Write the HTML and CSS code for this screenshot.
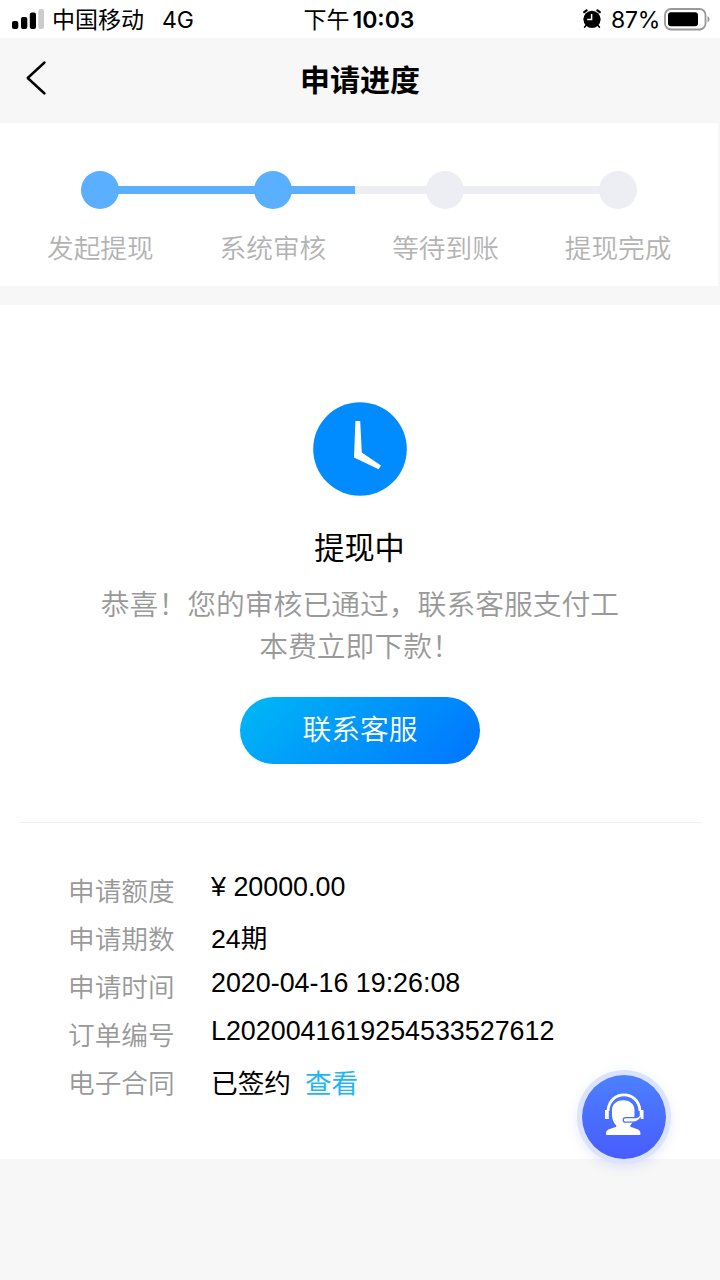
FILE: index.html
```html
<!DOCTYPE html>
<html lang="zh-CN">
<head>
<meta charset="UTF-8">
<title>申请进度</title>
<link rel="stylesheet" href="styles.css">
</head>
<body>
<div class="status">
  <div class="status-side">
    <svg class="signal" width="33" height="22" viewBox="0 0 33 22">
      <rect x="0" y="13" width="6.3" height="8" rx="2"/>
      <rect x="9" y="9" width="6.3" height="12" rx="2"/>
      <rect x="17.8" y="4.5" width="6.2" height="16.5" rx="2"/>
      <rect x="26.3" y="1" width="5.7" height="20" rx="2" fill="#ccc"/>
    </svg>
    <span class="carrier">中国移动</span>
    <span class="network">4G</span>
  </div>
  <div class="clock"><span>下午</span><b>10:03</b></div>
  <div class="status-side status-right">
    <svg class="alarm" width="20" height="20" viewBox="0 0 20 20">
      <circle cx="10" cy="10.3" r="8.6"/>
      <path d="M2.2 3.2 4.6 1.4M17.8 3.2 15.4 1.4" stroke="#000" stroke-width="2.2" stroke-linecap="round"/>
      <path d="M4 16.5 2.7 18M16 16.5 17.3 18" stroke="#000" stroke-width="1.8" stroke-linecap="round"/>
      <path d="M9.600 5V10.600H5.200" fill="none" stroke="#fff" stroke-width="1.5"/>
    </svg>
    <span class="percent">87%</span>
    <svg class="battery" width="46" height="23" viewBox="0 0 46 23">
      <rect x="1" y="1" width="40.5" height="20.5" rx="6" fill="#fff" stroke="#999" stroke-width="1.8"/>
      <rect x="4" y="4.3" width="30" height="14" rx="3"/>
      <path d="M43.5 8q2 .7 2 3.3t-2 3.3z" fill="#999"/>
    </svg>
  </div>
</div>
<header class="nav">
  <svg class="back" width="22" height="36" viewBox="0 0 22 36">
    <path d="M19.5 2.5 2.7 18 19.5 33.5" fill="none" stroke="#000" stroke-width="2.4" stroke-linecap="round" stroke-linejoin="round"/>
  </svg>
  <h1>申请进度</h1>
</header>
<section class="steps">
  <div class="step done"><i class="dot"></i><span>发起提现</span></div>
  <div class="step current"><i class="dot"></i><span>系统审核</span></div>
  <div class="step"><i class="dot"></i><span>等待到账</span></div>
  <div class="step"><i class="dot"></i><span>提现完成</span></div>
</section>
<main class="panel">
  <section class="result">
    <svg class="result-icon" width="94" height="94" viewBox="0 0 94 94">
      <circle cx="47" cy="47" r="46.8" fill="#008cff"/>
      <path d="M42.4 19h4.8l1.6 31.5L68 63.500 65.600 67.300 41 55.400z" fill="#fff"/>
    </svg>
    <h2>提现中</h2>
    <p>恭喜！您的审核已通过，联系客服支付工本费立即下款！</p>
    <a class="contact">联系客服</a>
  </section>
  <dl class="details">
    <dt>申请额度</dt><dd class="latin">¥ 20000.00</dd>
    <dt>申请期数</dt><dd>24期</dd>
    <dt>申请时间</dt><dd class="latin">2020-04-16 19:26:08</dd>
    <dt>订单编号</dt><dd class="latin">L2020041619254533527612</dd>
    <dt>电子合同</dt><dd>已签约<a class="view">查看</a></dd>
  </dl>
</main>
<a class="service">
  <svg width="40" height="44" viewBox="0 0 40 44">
    <path d="M4 19C5-2.500 35-2.500 36 19" fill="none" stroke="#fff" stroke-width="2.8"/>
    <path d="M1 18h3.800v9H1zM35.700 18h3.800v9h-3.800z" fill="#fff"/>
    <path d="M8 18C8 5 30.500 5 30.500 18V22c0 6-2.200 9-4.500 12 2 3 10.500 1.500 10.500 7.500 0 1-.5 1.500-1.500 1.500H3.500C2.500 43 2 42.500 2 41.500 2 35.500 11 37 12.500 34 10 31 8 28 8 22z" fill="#fff"/>
    <path d="M35.500 23.500Q34 26 30 25.600H21.500a2.300 2.300 0 0 0 0 4.600H29Q34.500 29.800 36.800 25.500" fill="#fff" stroke="#4b6dff" stroke-width="1.2"/>
  </svg>
</a>
</body>
</html>
```
FILE: styles.css
```css
* { box-sizing: border-box; }
body {
  margin: 0;
  width: 720px;
  height: 1280px;
  overflow: hidden;
  background: #f7f7f7;
  color: #000;
  font-family: "Liberation Sans", "Noto Sans CJK SC", sans-serif;
}
h1, h2, p, dl, dd { margin: 0; }
svg { display: block; flex: none; }
.status {
  display: grid;
  grid-template-columns: 1fr auto 1fr;
  height: 38px;
  padding: 0 10px 0 12px;
  background: #fff;
  font: 23px/40px Inter, "Noto Sans CJK SC", sans-serif;
}
.status-side { display: flex; align-items: center; height: 38px; white-space: nowrap; }
.status-side span { padding-top: 2px; }
.carrier { margin-left: 7px; }
.network { margin-left: 18px; }
.clock { margin-left: -4px; }
.clock b { font-weight: 600; margin-left: 3px; }
.percent { margin: 0 4px 0 9px; letter-spacing: -.3px; }
.status-right { justify-content: flex-end; }
.nav {
  display: grid;
  grid-template-columns: 60px 1fr 60px;
  align-items: center;
  height: 85px;
  padding: 0 0 5px;
}
.back { margin-left: 25px; }
h1 { padding-top: 5px; text-align: center; font-size: 30px; line-height: 40px; font-weight: 700; }
.steps {
  display: flex;
  width: 718px;
  height: 163px;
  padding: 48px 0 0 14px;
  background: #fff;
}
.step {
  flex: none;
  display: flex;
  flex-direction: column;
  align-items: center;
  width: 172.6px;
  color: #b3b3b3;
  font-size: 26.67px;
  font-weight: 350;
  line-height: 38px;
  background: linear-gradient(#edeef4, #edeef4) 0 15px / 100% 8px no-repeat;
}
.step:first-child { background-size: 87px 8px; background-position: 86px 15px; }
.step:last-child { background-size: 50% 8px; }
.step.done { background-image: linear-gradient(#5ab0ff, #5ab0ff); }
.step.current { background-image: linear-gradient(90deg, #5ab0ff 97.5%, #edeef4 97.5%); }
.dot { width: 38px; height: 38px; border-radius: 50%; background: #edeef4; }
.done .dot, .current .dot { background: #5ab0ff; }
.step span { margin-top: 21px; }
.panel { height: 854px; margin-top: 19px; background: #fff; }
.result {
  display: flex;
  flex-direction: column;
  align-items: center;
  height: 518px;
  margin: 0 18px 0 20px;
  padding: 97px 0 0;
  border-bottom: 1px solid #f0f0f0;
}
.result-icon { margin-left: -2px; }
h2 { margin: 32px 0 0 -3px; font-size: 30.2px; font-weight: 400; line-height: 42px; }
p {
  width: 520px;
  margin: 14px 0 0 -2px;
  text-align: center;
  color: #999;
  font-size: 28.8px;
  font-weight: 350;
  line-height: 42px;
}
.contact {
  width: 240px;
  height: 67px;
  margin: 29px 0 0 -2px;
  border-radius: 34px;
  background: linear-gradient(135deg, #00b8f5, #0074ff);
  color: #fff;
  font-size: 28.8px;
  font-weight: 350;
  line-height: 67px;
  text-align: center;
}
.details {
  display: grid;
  grid-template-columns: 143px 1fr;
  grid-auto-rows: 48px;
  padding: 45px 0 0 68px;
  font-size: 26.67px;
  line-height: 48px;
}
dt { color: #999; font-weight: 350; }
dd { margin-top: -1px; }
dd:last-child { margin-top: 0; }
.latin { margin-top: -5px; font-size: 26.85px; }
.view { margin-left: 14px; color: #1fb6f5; }
.service {
  position: absolute;
  left: 582px;
  top: 1075px;
  display: flex;
  justify-content: center;
  padding-top: 17px;
  width: 84px;
  height: 84px;
  border-radius: 50%;
  background: linear-gradient(#4c80ff, #485cff);
  box-shadow: 0 0 0 5px #dbe4ff, 0 4px 12px 4px rgba(80, 110, 255, .15);
}
```
